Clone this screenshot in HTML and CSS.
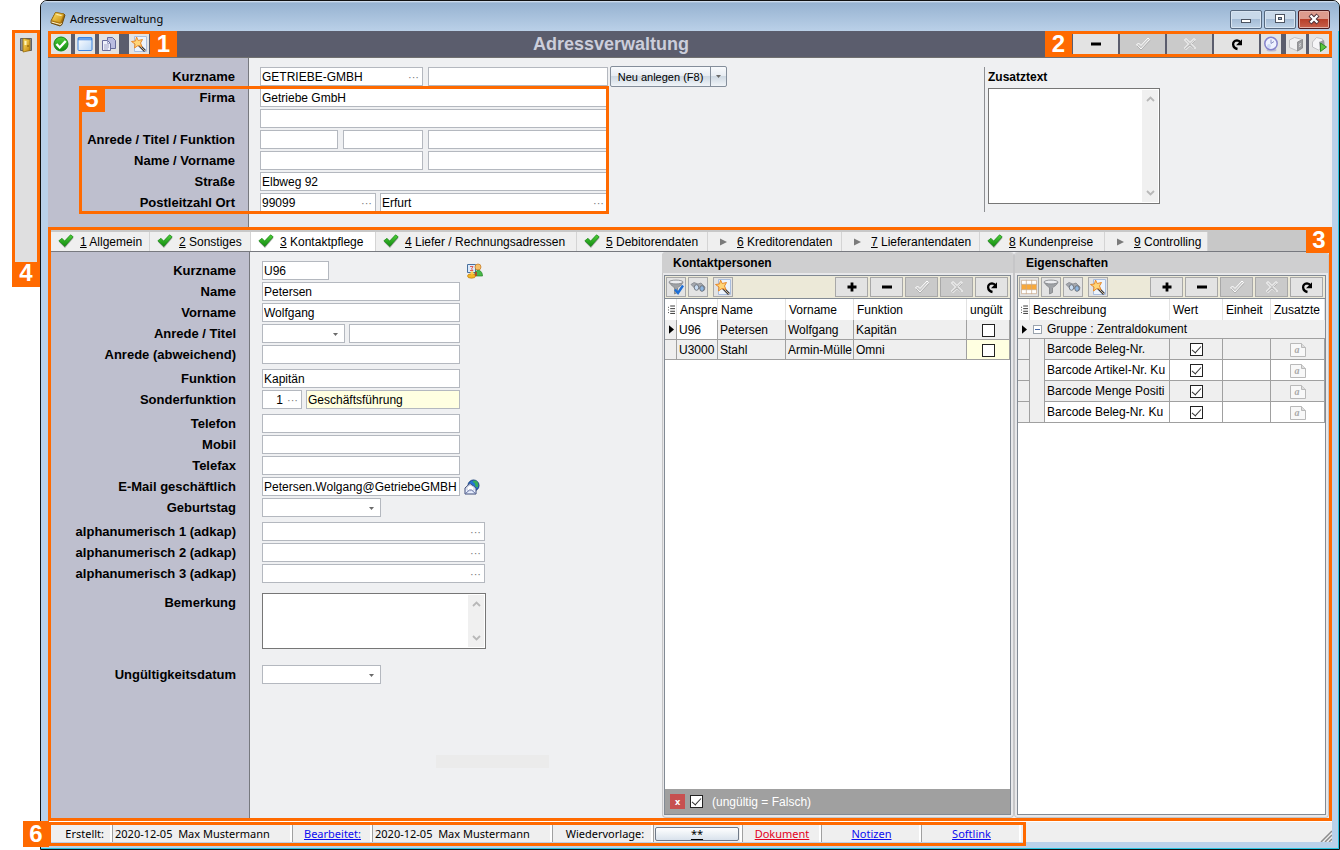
FILE: index.html
```html
<!DOCTYPE html>
<html lang="de">
<head>
<meta charset="utf-8">
<title>Adressverwaltung</title>
<link rel="stylesheet" href="styles.css">
</head>
<body>
<svg class="defs" aria-hidden="true">
  <defs>
    <linearGradient id="gGreen" x1="0" y1="0" x2="0" y2="1"><stop offset="0" stop-color="#4fd03a"/><stop offset="1" stop-color="#128a10"/></linearGradient>
    <linearGradient id="gGold" x1="0" y1="0" x2="1" y2="1"><stop offset="0" stop-color="#ffe46a"/><stop offset="1" stop-color="#c48408"/></linearGradient>
    <linearGradient id="gBlue" x1="0" y1="0" x2="1" y2="1"><stop offset="0" stop-color="#fff"/><stop offset="1" stop-color="#b9d6f5"/></linearGradient>
  </defs>
  <symbol id="book" viewBox="0 0 16 16"><path d="M5.500 1.500 14 3l1 1-3 9.500-2 1.500-9-3 .2-2.500Z" fill="#a8700a" stroke="#6b4a10"/><path d="M5.500 1.500 14 3l-3.500 9-9-2.500Z" fill="url(#gGold)" stroke="#a87510" stroke-width=".6"/><path d="m1.500 11 9 2.500 1-1.500" fill="none" stroke="#fff6d0"/><path d="m6.500 3.500 5 1" stroke="#fff6c8"/></symbol>
  <symbol id="door" viewBox="0 0 14 16"><path d="M1.500 1.500h11v12h-11z" fill="#8c8f98" stroke="#5d6068"/><path d="M4 1.500 11 2.500v11L4 15z" fill="url(#gGold)" stroke="#94690b" stroke-width=".8"/><path d="M6.500 4v4" stroke="#fff4b8" stroke-width="2"/><path d="M9 8v2" stroke="#7a5200"/></symbol>
  <symbol id="ok" viewBox="0 0 16 16"><circle cx="8" cy="8" r="7" fill="url(#gGreen)" stroke="#16861a"/><path d="m3.500 8 3.200 3.500 6-6.500" fill="none" stroke="#fff" stroke-width="2.400"/></symbol>
  <symbol id="win" viewBox="0 0 16 16"><rect x="1" y="1.500" width="14" height="13" rx="1" fill="url(#gBlue)" stroke="#3f83dc"/><path d="M1 3h14" stroke="#3f83dc" stroke-width="2.500"/><path d="M2 3h12" stroke="#8fc0ff"/></symbol>
  <symbol id="copy" viewBox="0 0 16 16"><path d="M6.500 1.500h5l3 3v8h-8z" fill="#b9bce0" stroke="#686c9c"/><path d="M1.500 4.500h5l3 3v7h-8z" fill="#eef0fb" stroke="#686c9c"/><path d="M6.500 4.500v3h3M3 9h5M3 11h5M3 13h4" fill="none" stroke="#8f93bc" stroke-width=".8"/></symbol>
  <symbol id="wand" viewBox="0 0 16 16"><path d="M3.500.500h12v15h-12z" fill="#edf4fd" stroke="#a9bddd"/><path d="m8 9 6 6" stroke="#3d3d45" stroke-width="2.600"/><path d="m9 10 5 5" stroke="#c8b28a" stroke-width="1"/><path d="M5.500 1 7.200 4.500 11.500 3.500 9.500 7 11 10.500 7 9.500 3.500 12 4 8 .500 5.500 4.500 5Z" fill="#ffd578" stroke="#e8892a"/></symbol>
  <symbol id="minus" viewBox="0 0 16 16"><path d="M3 8h10" stroke="#000" stroke-width="3"/></symbol>
  <symbol id="plus" viewBox="0 0 16 16"><path d="M3.500 8h9M8 3.500v9" stroke="#000" stroke-width="2.800"/></symbol>
  <symbol id="tickoff" viewBox="0 0 16 16"><path d="m1.500 9 2-2 2.500 2.500L13 2l1.500 1.500L6 13Z" fill="#cacaca" stroke="#fff"/><path d="m2 10 4 4L15 4.500" fill="none" stroke="#aaa" stroke-width=".8"/></symbol>
  <symbol id="crossoff" viewBox="0 0 16 16"><path d="m2.500 4 1.500-1.500 4 4 4-4L13.500 4l-4 4 4 4-1.500 1.500-4-4-4 4L2.500 12l4-4Z" fill="#cacaca" stroke="#fff"/><path d="m3 13 5-4 4.500 5M13.500 4.500 10 8" fill="none" stroke="#aaa" stroke-width=".8"/></symbol>
  <symbol id="redo" viewBox="0 0 16 16"><path d="M8.500 13C3 12 2.500 4.600 8 4.400c1.500 0 2.500.600 3.300 2" fill="none" stroke="#000" stroke-width="2.300"/><path d="M13 3.200v6H7Z"/></symbol>
  <symbol id="clock" viewBox="0 0 16 16"><ellipse cx="8.500" cy="14" rx="5" ry="1.500" fill="#babbd0"/><circle cx="8" cy="7.500" r="6.200" fill="#eef1ff" stroke="#8583cc" stroke-width="1.500"/><path d="M8 3.500v4l3-2" fill="none" stroke="#8990c4"/><circle cx="6" cy="10" r="2" fill="#ccd9f5"/></symbol>
  <symbol id="box" viewBox="0 0 16 16"><path d="m1.500 4 5-2.500 8 2V12l-5 3-8-3.500Z" fill="#f0f0f2" stroke="#b5b5b8" stroke-width=".8"/><path d="m9.500 6 5-2.500V12l-5 3Z" fill="#9b9ca0" stroke="#858588" stroke-width=".8"/><path d="m11 8.500 2-1M11 10.500l2-1" fill="none" stroke="#ddd"/></symbol>
  <symbol id="boxgo" viewBox="0 0 16 16"><path d="m1.500 6 4-4.500 6 1.500 1 7-5 4-6-3Z" fill="#f5f5f7" stroke="#b5b5b8" stroke-width=".8"/><path d="m8 6 5-2 1 7-5 3Z" fill="#9b9ca0"/><path d="m9.500 7 6 4-6 4.500Z" fill="#5bc53f" stroke="#2f8b24"/></symbol>
  <symbol id="check" viewBox="0 0 16 16"><path d="m1 8 3-2.800 2.600 2.600L13 1.200 15.500 4 7 14Z" fill="#777" opacity=".6"/><path d="m.8 6.800 3.200-2.500 2.600 2.800L12.500.8l2.700 2L6.800 12.500Z" fill="url(#gGreen)" stroke="#168412" stroke-width=".7"/></symbol>
  <symbol id="play" viewBox="0 0 16 16"><path d="m5 4.500 7 3.500-7 3.500Z" fill="#7b7b7b"/></symbol>
  <symbol id="person" viewBox="0 0 16 16"><path d="M.500 1.500h8v8h-8z" fill="#dceafa" stroke="#48709f"/><path d="M3 3.500h3L4.500 6 6 7.500H3" fill="none" stroke="#e0392c" stroke-width=".8"/><circle cx="11" cy="4" r="3" fill="#f6c06a" stroke="#c1761d" stroke-width=".7"/><path d="M7.500 13c0-8 8-7 8 0Z" fill="#47b848" stroke="#28852a" stroke-width=".7"/><ellipse cx="4.500" cy="13" rx="4" ry="2.200" fill="#f5b824" stroke="#bb7810" stroke-width=".7"/><circle cx="5" cy="10" r="1.700" fill="#ffce48"/><path d="M9 9v4" stroke="#c72f21" stroke-width="1.500"/></symbol>
  <symbol id="mail" viewBox="0 0 16 16"><circle cx="9.500" cy="6.500" r="5.500" fill="#2473d4" stroke="#173e78"/><path d="M9 2c4-2 6 2 5 6-2 1-3-1-3-3s-3-1-2-3Z" fill="#35ad59"/><path d="m1 9 5-4.500L12 9v6H1Z" fill="#e8efff" stroke="#3f4d78"/><path d="m3 8 3-2 4 2v3l-4 1-3-1Z" fill="#fff" stroke="#b2bad4" stroke-width=".7"/><path d="m1 15 4.500-4h2L12 15" fill="none" stroke="#6673a4"/></symbol>
  <symbol id="funnel" viewBox="0 0 16 16"><path d="M1 3c2 4 4.500 4 5.500 6v6l3-1.500V9C11 7 13.500 7 15 3Z" fill="#9fa2a6" stroke="#77797d" stroke-width=".7"/><ellipse cx="8" cy="3" rx="7" ry="1.900" fill="#ecedf0" stroke="#808387" stroke-width=".8"/></symbol>
  <symbol id="funnelok" viewBox="0 0 16 16"><use href="#funnel"/><path d="m7 10.500 3 3.500 5-7.500" fill="none" stroke="#1e6fd6" stroke-width="2.400"/></symbol>
  <symbol id="glass" viewBox="0 0 16 16"><path d="M1 5.500 4 3.500l4 1.500 3-1 4 4-.5 3-3 1-2-3-4 1Z" fill="#a5a8ae" stroke="#7d8086" stroke-width=".7"/><ellipse cx="6.500" cy="8.500" rx="2.200" ry="2.800" fill="#c9dcf2" stroke="#60646c" stroke-width=".8"/><ellipse cx="12" cy="9.500" rx="2.200" ry="2.800" fill="#8fb6e0" stroke="#60646c" stroke-width=".8"/></symbol>
  <symbol id="grid" viewBox="0 0 18 16"><path d="M.500.500h17v15H.500z" fill="#fff"/><path d="M.500 5h17v6H.500z" fill="#f9a93a"/><path d="M.500.500h17v15H.500zM6 0v16M12 0v16M0 5h18M0 11h18" fill="none" stroke="#c9a888" stroke-width=".8"/></symbol>
  <symbol id="rows" viewBox="0 0 8 10"><path d="M2.500 1H8M2.500 4H8M2.500 7H8M2.500 9.500H8M0 2.500h1M0 5.500h1M0 8.500h1" stroke="#222"/></symbol>
  <symbol id="cur" viewBox="0 0 6 10"><path d="m0 0 6 5-6 5Z"/></symbol>
  <symbol id="note" viewBox="0 0 16 14"><path d="M.500.500h11l4 4v9H.500z" fill="#f8f8f8" stroke="#b9b9b9"/><path d="M11.500.500v4h4" fill="#ddd" stroke="#b9b9b9"/></symbol>
  <symbol id="up" viewBox="0 0 9 6"><path d="m1 5 3.500-3.500L8 5" fill="none" stroke="#b8b8b8" stroke-width="1.800"/></symbol>
  <symbol id="down" viewBox="0 0 9 6"><path d="m1 1 3.500 3.500L8 1" fill="none" stroke="#b8b8b8" stroke-width="1.800"/></symbol>
  <symbol id="arrow" viewBox="0 0 5 3"><path d="M0 0h5L2.500 3Z" fill="#6a6a6a"/></symbol>
  <symbol id="grip" viewBox="0 0 12 12"><path d="M1 12 12 1M5 12l7-7M9 12l3-3" stroke="#8c8c8c" stroke-width="1.500"/></symbol>
  <symbol id="wmin" viewBox="0 0 14 12"><rect x="2.500" y="6.500" width="9" height="3" fill="#fff" stroke="#4b5361"/></symbol>
  <symbol id="wmax" viewBox="0 0 14 12"><rect x="2.500" y="1.500" width="9" height="8" fill="#fff" stroke="#4b5361"/><rect x="5.500" y="4.500" width="3" height="2" fill="#9bb2cf" stroke="#4b5361"/></symbol>
  <symbol id="wclose" viewBox="0 0 14 12"><path d="m3 2 8 8M11 2l-8 8" stroke="#4d3038" stroke-width="4.200"/><path d="m3.500 2.500 7 7M10.500 2.500l-7 7" stroke="#fff" stroke-width="2.300"/></symbol>
</svg>

<aside class="dock">
  <button class="dock-btn" aria-label="Schließen"><svg class="i14"><use href="#door"/></svg></button>
  <span class="badge dock-badge">4</span>
</aside>

<main class="window">
  <header class="titlebar">
    <svg class="i16"><use href="#book"/></svg>
    <span class="title">Adressverwaltung</span>
    <div class="winbtns">
      <button aria-label="Minimieren"><svg><use href="#wmin"/></svg></button>
      <button aria-label="Maximieren"><svg><use href="#wmax"/></svg></button>
      <button class="close" aria-label="Schließen"><svg><use href="#wclose"/></svg></button>
    </div>
  </header>

  <div class="bar">
    <div class="bargroup left">
      <button class="ib" aria-label="OK"><svg class="i16"><use href="#ok"/></svg></button>
      <button class="ib" aria-label="Fenster"><svg class="i16"><use href="#win"/></svg></button>
      <button class="ib" aria-label="Kopieren"><svg class="i16"><use href="#copy"/></svg></button>
      <button class="ib apart" aria-label="Assistent"><svg class="i16"><use href="#wand"/></svg></button>
      <span class="badge">1</span>
    </div>
    <h1>Adressverwaltung</h1>
    <div class="bargroup right">
      <span class="badge">2</span>
      <button class="wb" aria-label="Löschen"><svg class="i16"><use href="#minus"/></svg></button>
      <button class="wb off" aria-label="Speichern"><svg class="i16"><use href="#tickoff"/></svg></button>
      <button class="wb off" aria-label="Abbrechen"><svg class="i16"><use href="#crossoff"/></svg></button>
      <button class="wb" aria-label="Aktualisieren"><svg class="i16"><use href="#redo"/></svg></button>
      <button class="ib" aria-label="Zeit"><svg class="i16"><use href="#clock"/></svg></button>
      <button class="ib spaced" aria-label="Paket"><svg class="i16"><use href="#box"/></svg></button>
      <button class="ib" aria-label="Paket senden"><svg class="i16"><use href="#boxgo"/></svg></button>
    </div>
  </div>

  <section class="upper">
    <form class="form">
      <div class="row"><label for="u1">Kurzname</label><div class="fields">
        <span class="field w163"><input id="u1" value="GETRIEBE-GMBH"><button type="button" class="dots">···</button></span>
        <span class="field w180"><input aria-label="Kurzname 2"></span>
        <span class="split"><button type="button" class="new">Neu anlegen (F8)</button><button type="button" class="drop" aria-label="Mehr"><svg class="arrow"><use href="#arrow"/></svg></button></span></div></div>
      <div class="row"><label for="u2">Firma</label><div class="fields"><span class="field w348"><input id="u2" value="Getriebe GmbH"></span></div></div>
      <div class="row"><label></label><div class="fields"><span class="field w348"><input aria-label="Firma 2"></span></div></div>
      <div class="row"><label for="u3">Anrede / Titel / Funktion</label><div class="fields"><span class="field w78"><input id="u3"></span><span class="field w80"><input aria-label="Titel"></span><span class="field w180"><input aria-label="Funktion"></span></div></div>
      <div class="row"><label for="u4">Name / Vorname</label><div class="fields"><span class="field w163"><input id="u4"></span><span class="field w180"><input aria-label="Vorname"></span></div></div>
      <div class="row"><label for="u5">Straße</label><div class="fields"><span class="field w348"><input id="u5" value="Elbweg 92"></span></div></div>
      <div class="row"><label for="u6">Postleitzahl Ort</label><div class="fields tight"><span class="field w116"><input id="u6" value="99099"><button type="button" class="dots">···</button></span><span class="field w228"><input aria-label="Ort" value="Erfurt"><button type="button" class="dots">···</button></span></div></div>
    </form>
    <div class="extra">
      <label for="zt">Zusatztext</label>
      <div class="area"><textarea id="zt"></textarea><span class="scroll"><svg><use href="#up"/></svg><svg><use href="#down"/></svg></span></div>
    </div>
    <div class="frame frame5"><span class="badge">5</span></div>
  </section>

  <section class="lower">
    <nav class="tabs">
      <button class="tab"><svg class="i16"><use href="#check"/></svg><span><u>1</u> Allgemein</span></button>
      <button class="tab"><svg class="i16"><use href="#check"/></svg><span><u>2</u> Sonstiges</span></button>
      <button class="tab active"><svg class="i16"><use href="#check"/></svg><span><u>3</u> Kontaktpflege</span></button>
      <button class="tab"><svg class="i16"><use href="#check"/></svg><span><u>4</u> Liefer / Rechnungsadressen</span></button>
      <button class="tab"><svg class="i16"><use href="#check"/></svg><span><u>5</u> Debitorendaten</span></button>
      <button class="tab"><svg class="i16"><use href="#play"/></svg><span><u>6</u> Kreditorendaten</span></button>
      <button class="tab"><svg class="i16"><use href="#play"/></svg><span><u>7</u> Lieferantendaten</span></button>
      <button class="tab"><svg class="i16"><use href="#check"/></svg><span><u>8</u> Kundenpreise</span></button>
      <button class="tab"><svg class="i16"><use href="#play"/></svg><span><u>9</u> Controlling</span></button>
    </nav>
    <span class="badge badge3">3</span>

    <div class="content">
      <form class="form">
        <div class="row"><label for="k1">Kurzname</label><div class="fields wide"><span class="field w67"><input id="k1" value="U96"></span><svg class="i16 end"><use href="#person"/></svg></div></div>
        <div class="row"><label for="k2">Name</label><div class="fields"><span class="field w198"><input id="k2" value="Petersen"></span></div></div>
        <div class="row"><label for="k3">Vorname</label><div class="fields"><span class="field w198"><input id="k3" value="Wolfgang"></span></div></div>
        <div class="row"><label for="k4">Anrede / Titel</label><div class="fields tight"><span class="field w83"><select id="k4"><option></option></select><svg class="arrow"><use href="#arrow"/></svg></span><span class="field w111"><input aria-label="Titel"></span></div></div>
        <div class="row"><label for="k5">Anrede (abweichend)</label><div class="fields"><span class="field w198"><input id="k5"></span></div></div>
        <div class="row gap"><label for="k6">Funktion</label><div class="fields"><span class="field w198"><input id="k6" value="Kapitän"></span></div></div>
        <div class="row"><label for="k7">Sonderfunktion</label><div class="fields tight"><span class="field w40"><input id="k7" class="num" value="1"><button type="button" class="dots">···</button></span><span class="field w154 yellow"><input aria-label="Bezeichnung" value="Geschäftsführung" readonly></span></div></div>
        <div class="row gap"><label for="k8">Telefon</label><div class="fields"><span class="field w198"><input id="k8"></span></div></div>
        <div class="row"><label for="k9">Mobil</label><div class="fields"><span class="field w198"><input id="k9"></span></div></div>
        <div class="row"><label for="k10">Telefax</label><div class="fields"><span class="field w198"><input id="k10"></span></div></div>
        <div class="row"><label for="k11">E-Mail geschäftlich</label><div class="fields tight"><span class="field w198"><input id="k11" value="Petersen.Wolgang@GetriebeGMBH"></span><svg class="i16"><use href="#mail"/></svg></div></div>
        <div class="row"><label for="k12">Geburtstag</label><div class="fields"><span class="field w119"><select id="k12"><option></option></select><svg class="arrow"><use href="#arrow"/></svg></span></div></div>
        <div class="row gap"><label for="k13">alphanumerisch 1 (adkap)</label><div class="fields"><span class="field w223"><input id="k13"><button type="button" class="dots">···</button></span></div></div>
        <div class="row"><label for="k14">alphanumerisch 2 (adkap)</label><div class="fields"><span class="field w223"><input id="k14"><button type="button" class="dots">···</button></span></div></div>
        <div class="row"><label for="k15">alphanumerisch 3 (adkap)</label><div class="fields"><span class="field w223"><input id="k15"><button type="button" class="dots">···</button></span></div></div>
        <div class="row tall"><label for="k16">Bemerkung</label><div class="fields"><div class="area memo"><textarea id="k16"></textarea><span class="scroll"><svg><use href="#up"/></svg><svg><use href="#down"/></svg></span></div></div></div>
        <div class="row date"><label for="k17">Ungültigkeitsdatum</label><div class="fields"><span class="field w119"><select id="k17"><option></option></select><svg class="arrow"><use href="#arrow"/></svg></span></div></div>
        <div class="ghost"></div>
      </form>

      <section class="panel contacts">
        <h2>Kontaktpersonen</h2>
        <div class="pane">
          <div class="tools">
            <button class="ib" aria-label="Filter"><svg class="i16"><use href="#funnelok"/></svg></button>
            <button class="ib" aria-label="Suchen"><svg class="i16"><use href="#glass"/></svg></button>
            <button class="ib set" aria-label="Assistent"><svg class="i16"><use href="#wand"/></svg></button>
            <span class="push"></span>
            <button class="mb" aria-label="Neu"><svg class="i16"><use href="#plus"/></svg></button>
            <button class="mb" aria-label="Löschen"><svg class="i16"><use href="#minus"/></svg></button>
            <button class="mb off" aria-label="Speichern"><svg class="i16"><use href="#tickoff"/></svg></button>
            <button class="mb off" aria-label="Abbrechen"><svg class="i16"><use href="#crossoff"/></svg></button>
            <button class="mb" aria-label="Aktualisieren"><svg class="i16"><use href="#redo"/></svg></button>
          </div>
          <table class="grid">
            <colgroup><col class="c12"><col class="c41"><col class="c68"><col class="c68"><col><col class="c43"></colgroup>
            <thead><tr><th class="ind"><svg class="rows"><use href="#rows"/></svg></th><th>Anspre</th><th>Name</th><th>Vorname</th><th>Funktion</th><th>ungült</th></tr></thead>
            <tbody>
              <tr><td class="ind"><svg class="cur"><use href="#cur"/></svg></td><td class="white">U96</td><td>Petersen</td><td>Wolfgang</td><td>Kapitän</td><td class="mid"><input type="checkbox" aria-label="ungültig U96"></td></tr>
              <tr><td class="ind"></td><td>U3000</td><td>Stahl</td><td>Armin-Mülle</td><td>Omni</td><td class="mid yellow"><input type="checkbox" aria-label="ungültig U3000"></td></tr>
            </tbody>
          </table>
          <div class="filter"><button class="x" aria-label="Filter löschen">x</button><input type="checkbox" id="flt" checked><label for="flt">(ungültig = Falsch)</label></div>
        </div>
      </section>

      <section class="panel props">
        <h2>Eigenschaften</h2>
        <div class="pane">
          <div class="tools">
            <button class="ib" aria-label="Ansicht"><svg class="i16"><use href="#grid"/></svg></button>
            <button class="ib" aria-label="Filter"><svg class="i16"><use href="#funnel"/></svg></button>
            <button class="ib" aria-label="Suchen"><svg class="i16"><use href="#glass"/></svg></button>
            <button class="ib set" aria-label="Assistent"><svg class="i16"><use href="#wand"/></svg></button>
            <span class="push"></span>
            <button class="mb" aria-label="Neu"><svg class="i16"><use href="#plus"/></svg></button>
            <button class="mb" aria-label="Löschen"><svg class="i16"><use href="#minus"/></svg></button>
            <button class="mb off" aria-label="Speichern"><svg class="i16"><use href="#tickoff"/></svg></button>
            <button class="mb off" aria-label="Abbrechen"><svg class="i16"><use href="#crossoff"/></svg></button>
            <button class="mb" aria-label="Aktualisieren"><svg class="i16"><use href="#redo"/></svg></button>
          </div>
          <table class="grid attrs">
            <colgroup><col class="c12"><col class="c15"><col><col class="c53"><col class="c48"><col class="c54"></colgroup>
            <thead><tr><th class="ind"><svg class="rows"><use href="#rows"/></svg></th><th colspan="2">Beschreibung</th><th>Wert</th><th>Einheit</th><th>Zusatzte</th></tr></thead>
            <tbody>
              <tr class="group"><td class="ind"><svg class="cur"><use href="#cur"/></svg></td><td colspan="5"><button class="fold" aria-label="Gruppe zuklappen"></button>Gruppe : Zentraldokument</td></tr>
              <tr><td class="ind"></td><td class="indent" rowspan="4"></td><td>Barcode Beleg-Nr.</td><td class="mid"><input type="checkbox" checked aria-label="Wert"></td><td></td><td class="mid"><span class="note"><svg><use href="#note"/></svg><i>a</i></span></td></tr>
              <tr class="alt"><td class="ind"></td><td>Barcode Artikel-Nr. Ku</td><td class="mid"><input type="checkbox" checked aria-label="Wert"></td><td></td><td class="mid"><span class="note"><svg><use href="#note"/></svg><i>a</i></span></td></tr>
              <tr><td class="ind"></td><td>Barcode Menge Positi</td><td class="mid"><input type="checkbox" checked aria-label="Wert"></td><td></td><td class="mid"><span class="note"><svg><use href="#note"/></svg><i>a</i></span></td></tr>
              <tr class="alt"><td class="ind"></td><td>Barcode Beleg-Nr. Ku</td><td class="mid"><input type="checkbox" checked aria-label="Wert"></td><td></td><td class="mid"><span class="note"><svg><use href="#note"/></svg><i>a</i></span></td></tr>
            </tbody>
          </table>
        </div>
      </section>
    </div>
  </section>

  <footer class="status">
    <div class="cells">
      <span class="cell first">Erstellt:</span>
      <span class="cell stamp">2020-12-05&nbsp; Max Mustermann</span>
      <span class="cell link1"><a href="#">Bearbeitet:</a></span>
      <span class="cell stamp">2020-12-05&nbsp; Max Mustermann</span>
      <span class="cell again">Wiedervorlage:</span>
      <span class="cell btncell"><button class="stars"><u>**</u></button></span>
      <span class="cell doc"><a class="red" href="#">Dokument</a></span>
      <span class="cell last"><a href="#">Notizen</a></span>
      <span class="cell last"><a href="#">Softlink</a></span>
      <div class="frame frame6"><span class="badge">6</span></div>
    </div>
    <svg class="grip"><use href="#grip"/></svg>
  </footer>
</main>
</body>
</html>
```

FILE: styles.css
```css
:root {
  --orange: #ff6a00;
  --lav: #bebfce;
  --pale: #eff0f2;
  --line: #b4b8bf;
  --dark: #5b5d6d;
}
* { box-sizing: border-box; }
body {
  margin: 0;
  min-height: 100vh;
  display: flex;
  background: #fff;
  color: #000;
  font: 13px/16px "Liberation Sans", Arial, sans-serif;
}
.defs { position: absolute; width: 0; height: 0; }
button, input, select, textarea { font: inherit; color: inherit; margin: 0; }
button { padding: 0; border: 0; display: flex; align-items: center; justify-content: center; flex: none; }
svg { display: block; flex: none; }
.i16 { width: 16px; height: 16px; }
.i14 { width: 14px; height: 16px; }

.badge {
  width: 26px;
  height: 26px;
  flex: none;
  background: var(--orange);
  color: #fff;
  font: bold 24px/26px "Liberation Sans", Arial, sans-serif;
  text-align: center;
}
.frame { position: absolute; border: 3px solid var(--orange); pointer-events: none; }

.dock {
  width: 28px;
  height: 257px;
  margin: 30px 0 0 12px;
  flex: none;
  border: 3px solid var(--orange);
  background: #dfdfe0;
  display: flex;
  flex-direction: column;
  align-items: center;
  justify-content: space-between;
}
.dock-btn { margin-top: 4px; background: none; }
.dock-badge { width: 22px; height: 22px; line-height: 22px; }

.window {
  flex: 1;
  min-width: 0;
  display: flex;
  flex-direction: column;
  border: 1px solid #111;
  border-radius: 7px 7px 0 0;
  padding: 0 7px 7px;
  background: #b9d1ea;
  box-shadow: inset -1px -1px 0 #27c4e0;
}
.titlebar {
  height: 30px;
  margin: 0 -7px;
  padding: 6px 9px 0;
  display: flex;
  align-items: center;
  border-radius: 6px 6px 0 0;
  background: linear-gradient(#dfe9f5, #97b3d1 2px, #bad0e8);
}
.title { margin-left: 4px; flex: 1; font: 11px/16px "Noto Sans", sans-serif; }
.winbtns { display: flex; gap: 2px; }
.winbtns button {
  width: 32px;
  height: 19px;
  border: 1px solid #56687f;
  border-radius: 2px;
  background: linear-gradient(#c9d9ea 45%, #a5bcd6 50%, #bdd1e6);
  box-shadow: inset 0 0 0 1px #d8e4f1;
}
.winbtns .close { border-color: #4c1a1e; background: linear-gradient(#dd9b8d 45%, #b8402a 50%, #c8604b); box-shadow: inset 0 0 0 1px #e3b0a6; }
.winbtns svg { width: 14px; height: 12px; }

.bar { display: flex; height: 27px; background: var(--dark); border-bottom: 1px solid #707070; }
.bar h1 { flex: 1; margin: 0; text-align: center; font-size: 18px; line-height: 26px; color: #cccedb; }
.bargroup { display: flex; height: 26px; border: 3px solid var(--orange); }
.bargroup .badge { margin: -3px; width: 27px; }
.bargroup.left { gap: 4px; }
.bargroup .apart { margin-left: 6px; }
.bargroup.right { gap: 2px; }
.bargroup.right .badge { margin-right: -1px; }
.bargroup .spaced { margin-left: 3px; margin-right: 1px; }
.ib { width: 20px; height: 20px; background: #e3e3e3; }
.wb { width: 45px; height: 20px; background: #e3e3e3; }
.off { background: #cacaca; }

.upper { position: relative; display: flex; background: var(--pale); }
.form {
  flex: 1;
  min-width: 0;
  padding: 9px 0 15px;
  display: flex;
  flex-direction: column;
  gap: 2px;
  background: linear-gradient(to right, var(--lav) 200px, #77797f 200px, #77797f 201px, var(--pale) 201px);
}
.row { display: flex; }
.row > label { width: 212px; padding-right: 25px; flex: none; text-align: right; font-weight: bold; line-height: 19px; white-space: nowrap; }
.fields { display: flex; align-items: center; gap: 5px; }
.tight { gap: 4px; }
.wide { width: 221px; }
.end { margin-left: auto; }
.field { position: relative; display: flex; height: 19px; border: 1px solid var(--line); background: #fff; flex: none; font-size: 12px; }
.field input, .field select { flex: 1; width: 0; min-width: 0; border: 0; padding: 0 1px; background: none; outline: 0; appearance: none; }
.field .num { text-align: right; }
.field .arrow { position: absolute; right: 6px; top: 8px; }
.arrow { width: 5px; height: 3px; }
.dots { width: 17px; background: none; color: #777; font-size: 11px; line-height: 14px; }
.field.yellow { background: #ffffe1; }
.w40 { width: 40px; } .w67 { width: 67px; } .w78 { width: 78px; } .w80 { width: 80px; }
.w83 { width: 83px; } .w111 { width: 111px; } .w116 { width: 116px; } .w119 { width: 119px; }
.w154 { width: 154px; } .w163 { width: 163px; } .w180 { width: 180px; } .w198 { width: 198px; }
.w223 { width: 223px; } .w228 { width: 228px; } .w348 { width: 348px; }

.split { display: flex; height: 21px; margin: -1px 0 -1px -3px; border: 1px solid #848e9b; border-radius: 2px; background: linear-gradient(#f8fafc, #e8edf3 45%, #cfd9e3 50%, #f0f4f8); }
.split button { background: none; }
.split .new { width: 99px; font-size: 11px; }
.split .drop { width: 16px; border-left: 1px solid #848e9b; }

.extra { width: 176px; margin: 9px 172px 15px 0; padding-left: 3px; flex: none; border-left: 1px solid #8d8f93; }
.extra label { display: block; font-weight: bold; font-size: 12px; line-height: 21px; }
.area { display: flex; height: 116px; border: 1px solid #767676; background: #fff; padding: 1px; }
.area textarea { flex: 1; width: 0; border: 0; resize: none; outline: 0; background: none; }
.scroll { width: 16px; padding: 6px 0; display: flex; flex-direction: column; align-items: center; justify-content: space-between; background: #f0f0f0; }
.scroll svg { width: 9px; height: 6px; }
.memo { width: 224px; height: 56px; }
.frame5 { left: 31px; top: 28px; width: 530px; height: 128px; }
.frame5 .badge { display: block; margin: -3px; }

.lower { position: relative; flex: 1; min-height: 0; display: flex; flex-direction: column; border: 3px solid var(--orange); background: var(--pale); }
.tabs {
  display: grid;
  grid-template-columns: 99px 101px 125px 201px 131px 134px 138px 125px 103px;
  height: 22px;
  padding-top: 2px;
  background: #c8c8c8;
  border-bottom: 1px solid #77797f;
}
.tab { justify-content: flex-start; gap: 6px; padding-left: 7px; background: #efefef; border-right: 1px solid #d4d4d4; white-space: nowrap; font-size: 12px; }
.active { background: #fff; }
.badge3 { position: absolute; top: -3px; right: -3px; }
.content { flex: 1; min-height: 0; display: flex; }
.content .form { background: linear-gradient(to right, var(--lav) 198px, #77797f 198px, #77797f 199px, var(--pale) 199px); padding-bottom: 0; }
.content .row > label { width: 211px; padding-right: 26px; }
.row.gap { margin-top: 3px; }
.row.tall { margin-top: 8px; }
.row.date { margin-top: 14px; }
.ghost { width: 113px; height: 13px; margin: 69px 0 0 385px; background: #ebebeb; }

.panel { display: flex; flex-direction: column; padding: 0 2px 2px 1px; background: #e8e8ea; border: 1px solid #c6c6c8; border-top: 0; border-radius: 4px; flex: none; }
.contacts { width: 352px; }
.props { width: 315px; padding-left: 2px; }
.panel h2 { margin: 0 -2px 2px; padding-left: 11px; height: 21px; font-size: 12px; line-height: 22px; background: #cfcfd0; border-radius: 4px 4px 0 0; }
.pane { flex: 1; display: flex; flex-direction: column; border: 1px solid #828a94; background: #fff; }
.tools { display: flex; gap: 2px; height: 23px; padding: 1px 2px 2px 1px; background: #ece9d8; border-bottom: 1px solid #828a94; }
.tools .ib, .tools .mb { border: 1px solid #a8a8a8; height: 20px; }
.mb { width: 33px; background: #e3e3e3; }
.tools .off { background: #cacaca; }
.set { margin-left: 3px; }
.push { flex: 1; }

.grid { width: 100%; table-layout: fixed; border-collapse: separate; border-spacing: 0; font-size: 12px; }
.grid th, .grid td { padding: 0 1px 0 2px; height: 20px; overflow: hidden; white-space: nowrap; text-align: left; font-weight: normal; border-right: 1px solid #a0a0a0; }
.grid th { height: 21px; padding: 0 0 0 3px; border-right-color: #e2e2e2; }
.grid td { background: #efefef; border-bottom: 1px solid #a0a0a0; }
.grid .white, .grid .alt td { background: #fff; }
.grid .yellow { background: #ffffe1; }
.grid .ind { padding: 0; }
.grid td.ind, .grid td.indent { background: #efefef; }
.grid .mid { text-align: center; padding: 0; }
.attrs td { height: 21px; }
.attrs .group td { height: 19px; border-right: 0; }
.c12 { width: 12px; } .c15 { width: 15px; } .c41 { width: 41px; } .c43 { width: 43px; } .c48 { width: 48px; } .c53 { width: 53px; } .c54 { width: 54px; } .c68 { width: 68px; }
.rows { width: 7px; height: 9px; margin-left: 3px; }
.cur { width: 5px; height: 9px; margin-left: 4px; }
input[type="checkbox"] {
  appearance: none;
  position: relative;
  width: 13px;
  height: 13px;
  border: 1px solid #222;
  background: #fff;
  vertical-align: middle;
  flex: none;
}
input[type="checkbox"]:checked::after { content: ""; position: absolute; left: 3px; top: 0; width: 4px; height: 8px; border: solid #333; border-width: 0 1px 1px 0; transform: rotate(42deg); }
.fold { display: inline-block; position: relative; width: 9px; height: 9px; margin: 0 5px 0 1px; border: 1px solid #9aa3ad; background: #fff; }
.fold::after { content: ""; position: absolute; left: 1px; right: 1px; top: 3px; height: 1px; background: #3c63a8; }
.note { position: relative; display: inline-block; width: 16px; height: 14px; vertical-align: middle; }
.note svg { width: 16px; height: 14px; }
.note i { position: absolute; left: 5px; top: 0; font: italic bold 10px/13px "Liberation Serif", serif; color: #aaa; }
.filter { margin-top: auto; height: 25px; padding: 0 5px; display: flex; align-items: center; gap: 5px; background: #a0a0a0; color: #fff; }
.filter label { margin-left: 4px; font-size: 12px; }
.x { width: 15px; height: 15px; background: #c75050; color: #fff; font: bold 9px/12px "Noto Sans", sans-serif; }

.status { display: flex; justify-content: space-between; align-items: flex-end; height: 21px; background: #efefef; border-top: 1px solid #fff; font: 11px/16px "Noto Sans", sans-serif; }
.cells { position: relative; display: flex; height: 20px; width: 978px; padding: 3px 3px 0; }
.cell { display: flex; align-items: center; justify-content: center; padding: 0 2px; border-left: 1px solid #a0a0a0; box-shadow: inset -2px 0 0 #fff; white-space: nowrap; }
.cell.first { width: 61px; border-left: 0; justify-content: flex-end; padding-right: 8px; }
.stamp { width: 180px; justify-content: flex-start; }
.link1 { width: 80px; }
.again { width: 101px; padding-left: 6px; }
.btncell { width: 89px; padding: 0 3px 0 1px; }
.doc { width: 79px; }
.last { width: 100px; }
.cell a { color: #0b0bf0; }
.cell .red { color: #e3001b; }
.stars { flex: 1; height: 14px; border: 1px solid #707a88; border-radius: 2px; background: linear-gradient(#fff, #d9e2ec); line-height: 12px; }
.frame6 { inset: 0 0 -4px; }
.frame6 .badge { position: absolute; top: -4px; left: -28px; }
.grip { width: 12px; height: 12px; }
```
